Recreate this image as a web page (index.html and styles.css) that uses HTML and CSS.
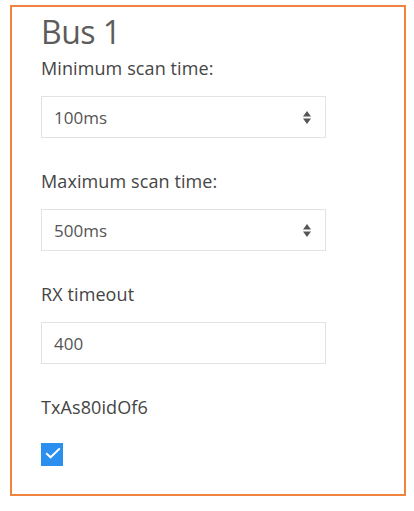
FILE: index.html
```html
<!DOCTYPE html>
<html lang="en">
<head>
    <meta charset="UTF-8">
    <meta name="viewport" content="width=device-width, initial-scale=1.0">
    <title>Bus 1</title>
    <link rel="stylesheet" href="styles.css">
</head>
<body>

    <div class="panel">
        <h2>Bus 1</h2>

        <div class="field">
            <label>Minimum scan time:</label>
            <div class="select">
                <span>100ms</span>
                <svg width="8" height="13" viewBox="0 0 8 13"><path d="M4 0 L8 5.5 L0 5.5 Z M0 7.5 L8 7.5 L4 13 Z" fill="#555"/></svg>
            </div>
        </div>

        <div class="field">
            <label>Maximum scan time:</label>
            <div class="select">
                <span>500ms</span>
                <svg width="8" height="13" viewBox="0 0 8 13"><path d="M4 0 L8 5.5 L0 5.5 Z M0 7.5 L8 7.5 L4 13 Z" fill="#555"/></svg>
            </div>
        </div>

        <div class="field">
            <label>RX timeout</label>
            <input type="text" value="400" />
        </div>

        <div class="field last">
            <label>TxAs80idOf6</label>
            <span class="checkbox">
                <svg width="16" height="12" viewBox="0 0 16 12"><path d="M1.2 6.2 L5.6 10.3 L14.8 1.4" fill="none" stroke="#fff" stroke-width="2"/></svg>
            </span>
        </div>
    </div>

</body>
</html>
```

FILE: styles.css
```css
body, html {
    margin: 0;
    padding: 0;
    background: #fff;
    font-family: 'Open Sans', sans-serif;
    color: #555;
}
.panel {
    margin: 5px 8px 0 10px;
    height: 491px;
    box-sizing: border-box;
    border: 2px solid #f0843c;
    padding: 0 29px;
}
.panel h2 {
    margin: 5px 0 4px 0;
    font-size: 32px;
    line-height: 40px;
    font-weight: 400;
    color: #5c5c5c;
    letter-spacing: -0.5px;
}
.field {
    margin-bottom: 31px;
}
.field label {
    display: block;
    font-size: 18px;
    line-height: 24px;
    color: #454545;
    margin-bottom: 16px;
    letter-spacing: 0.1px;
}
.field.last label {
    margin-bottom: 24px;
}
.select, .field input {
    box-sizing: border-box;
    width: 285px;
    height: 42px;
    border: 1px solid #e3e3e3;
    padding: 0 14px 0 12px;
    font-family: 'Open Sans', sans-serif;
    font-size: 17px;
    color: #555;
    background: #fff;
}
.select {
    display: flex;
    align-items: center;
    justify-content: space-between;
}
.field input {
    display: block;
    outline: none;
}
.checkbox {
    display: flex;
    justify-content: center;
    box-sizing: border-box;
    width: 22px;
    height: 23px;
    padding: 4px 0 0 2px;
    background: #2b8ff0;
}
```
